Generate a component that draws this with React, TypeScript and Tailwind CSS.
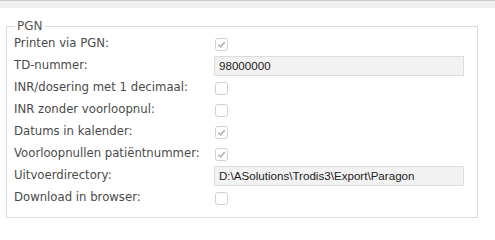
import React from "react";

type Row =
  | { label: string; kind: "check"; checked: boolean }
  | { label: string; kind: "text"; value: string };

const rows: Row[] = [
  { label: "Printen via PGN:", kind: "check", checked: true },
  { label: "TD-nummer:", kind: "text", value: "98000000" },
  { label: "INR/dosering met 1 decimaal:", kind: "check", checked: false },
  { label: "INR zonder voorloopnul:", kind: "check", checked: false },
  { label: "Datums in kalender:", kind: "check", checked: true },
  { label: "Voorloopnullen patiëntnummer:", kind: "check", checked: true },
  { label: "Uitvoerdirectory:", kind: "text", value: "D:\\ASolutions\\Trodis3\\Export\\Paragon" },
  { label: "Download in browser:", kind: "check", checked: false },
];

function Check({ checked }: { checked: boolean }) {
  return (
    <div className="ml-[1px] flex h-[13px] w-[13px] items-center justify-center rounded-[3px] border border-[#d0d0d0] bg-white">
      {checked && (
        <svg width="9" height="9" viewBox="0 0 10 10">
          <path d="M1.5 5.2 L4 7.6 L8.6 2.4" fill="none" stroke="#b5b5b5" strokeWidth="1.8" />
        </svg>
      )}
    </div>
  );
}

export default function App() {
  return (
    <div className="h-[240px] w-[495px] bg-white font-['DejaVu_Sans',sans-serif]">
      <div className="h-[8px] border-t border-[#c9c9c9] bg-[#efefef]" />
      <fieldset className="ml-[6px] mt-[11px] w-[472px] border border-[#dcdcdc] px-[7px] pb-[8px] pt-0">
        <legend className="ml-[1px] px-[2px] text-[12px] leading-[14px] text-[#555]">PGN</legend>
        <div className="flex flex-col">
          {rows.map((r) => (
            <div key={r.label} className="flex h-[22px] items-center">
              <span className="w-[200px] text-[11.7px] text-[#4a4a4a]">{r.label}</span>
              {r.kind === "check" ? (
                <Check checked={r.checked} />
              ) : (
                <div className="flex h-[20px] w-[250px] items-center border border-[#dcdcdc] bg-[#f2f2f2] px-[4px] font-['Liberation_Sans',sans-serif] text-[11.6px] text-[#222]">
                  {r.value}
                </div>
              )}
            </div>
          ))}
        </div>
      </fieldset>
    </div>
  );
}
